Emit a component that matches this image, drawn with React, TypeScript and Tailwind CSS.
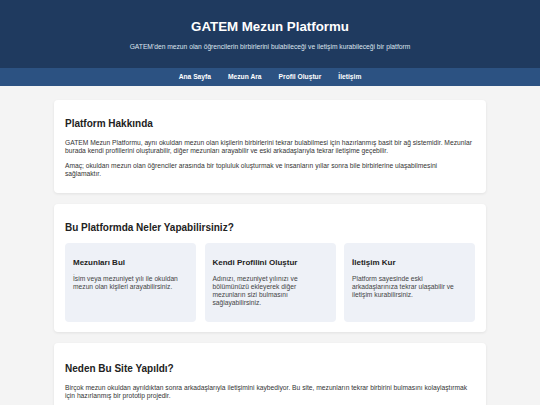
import React from "react";

const features = [
  {
    title: "Mezunları Bul",
    text: "İsim veya mezuniyet yılı ile okuldan mezun olan kişileri arayabilirsiniz.",
  },
  {
    title: "Kendi Profilini Oluştur",
    text: "Adınızı, mezuniyet yılınızı ve bölümünüzü ekleyerek diğer mezunların sizi bulmasını sağlayabilirsiniz.",
  },
  {
    title: "İletişim Kur",
    text: "Platform sayesinde eski arkadaşlarınıza tekrar ulaşabilir ve iletişim kurabilirsiniz.",
  },
];

export default function App() {
  return (
    <div
      className="min-h-[405px] bg-[#f4f4f4] text-[#222]"
      style={{ fontFamily: '"Liberation Sans", Arial, sans-serif' }}
    >
      <header className="bg-[#1f3a5f] text-white text-center pt-[19px] pb-[17px]">
        <h1 className="text-[13.3px] leading-[16px] font-bold">GATEM Mezun Platformu</h1>
        <p className="mt-[8px] text-[6.7px] leading-[8px] text-[#dde4ee]">
          GATEM'den mezun olan öğrencilerin birbirlerini bulabileceği ve iletişim kurabileceği bir platform
        </p>
      </header>
      <nav className="bg-[#2c5282] h-[18px] flex items-center justify-center gap-[17px] text-white text-[6.7px] font-bold">
        <a>Ana Sayfa</a>
        <a>Mezun Ara</a>
        <a>Profil Oluştur</a>
        <a>İletişim</a>
      </nav>
      <main className="w-[432px] mx-auto pt-[14px] flex flex-col gap-[11px]">
        <section className="bg-white rounded-[4px] shadow-[0_1px_3px_rgba(0,0,0,0.08)] px-[11px] pt-[11px] pb-[11px]">
          <h2 className="mt-[7px] mb-[9px] text-[10px] leading-[12px] font-bold">Platform Hakkında</h2>
          <p className="text-[6.7px] leading-[8px] text-[#333] mb-[7px]">
            GATEM Mezun Platformu, aynı okuldan mezun olan kişilerin birbirlerini tekrar bulabilmesi için hazırlanmış basit bir ağ sistemidir. Mezunlar burada kendi profillerini oluşturabilir, diğer mezunları arayabilir ve eski arkadaşlarıyla tekrar iletişime geçebilir.
          </p>
          <p className="text-[6.7px] leading-[8px] text-[#333] mb-[4px]">
            Amaç; okuldan mezun olan öğrenciler arasında bir topluluk oluşturmak ve insanların yıllar sonra bile birbirlerine ulaşabilmesini
            <br />
            sağlamaktır.
          </p>
        </section>
        <section className="bg-white rounded-[4px] shadow-[0_1px_3px_rgba(0,0,0,0.08)] px-[11px] pt-[11px] pb-[10px]">
          <h2 className="mt-[7px] mb-[9px] text-[10px] leading-[12px] font-bold">Bu Platformda Neler Yapabilirsiniz?</h2>
          <div className="grid grid-cols-3 gap-[8.5px]">
            {features.map((f) => (
              <div key={f.title} className="bg-[#eef1f7] rounded-[4px] px-[8px] pt-[8px] pb-[8px]">
                <h3 className="mt-[7px] mb-[7px] text-[8px] leading-[10px] font-bold text-[#222]">{f.title}</h3>
                <p className="text-[6.7px] leading-[8px] text-[#444] mb-[7px]">{f.text}</p>
              </div>
            ))}
          </div>
        </section>
        <section className="bg-white rounded-[4px] shadow-[0_1px_3px_rgba(0,0,0,0.08)] px-[11px] pt-[12px] pb-[11px]">
          <h2 className="mt-[8px] mb-[9px] text-[10px] leading-[12px] font-bold">Neden Bu Site Yapıldı?</h2>
          <p className="text-[6.7px] leading-[8px] text-[#333] mb-[4px]">
            Birçok mezun okuldan ayrıldıktan sonra arkadaşlarıyla iletişimini kaybediyor. Bu site, mezunların tekrar birbirini bulmasını kolaylaştırmak için hazırlanmış bir prototip projedir.
          </p>
        </section>
      </main>
    </div>
  );
}
